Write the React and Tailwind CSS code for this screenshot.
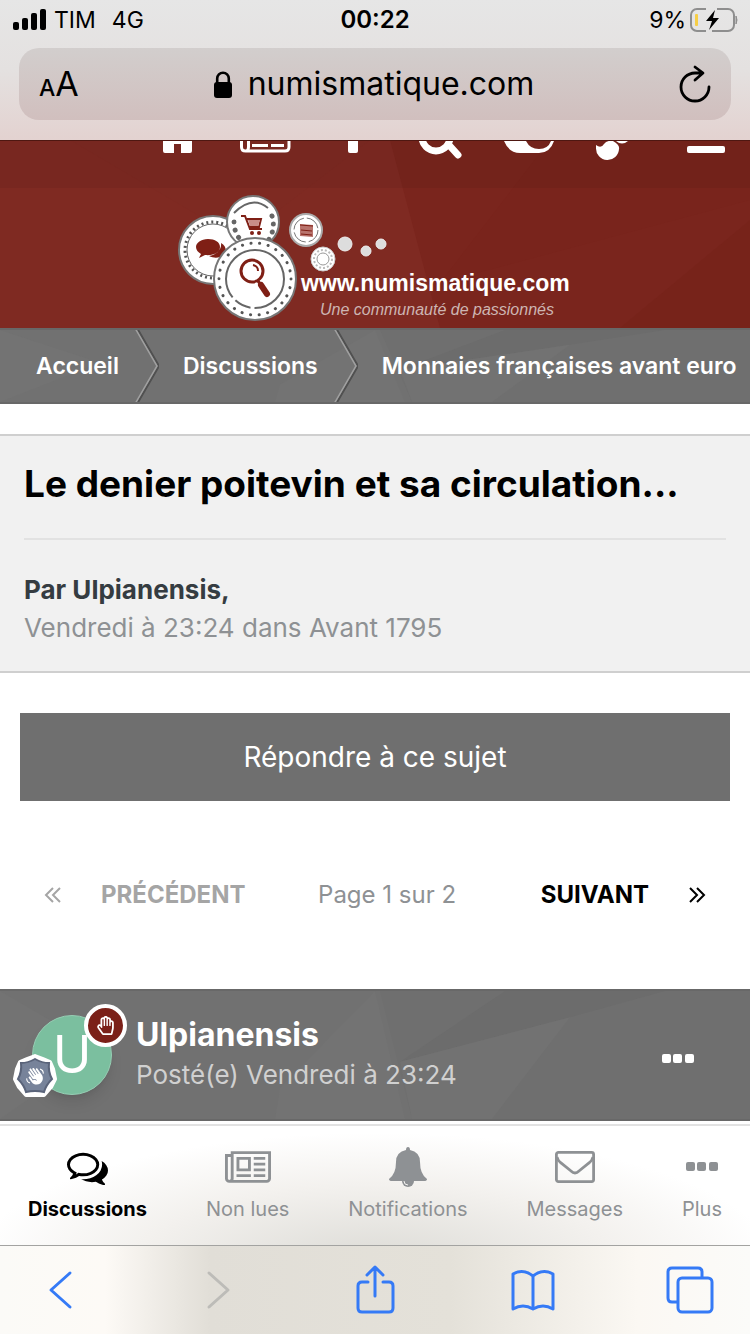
import { FaRegHandPaper } from "react-icons/fa";
import { MdWavingHand } from "react-icons/md";

function StatusBar() {
  return (
    <div className="grid grid-cols-3 items-center h-10 px-3">
      <div className="flex items-center text-[23px]">
        <svg width="34" height="22" viewBox="0 0 34 22" className="mr-2">
          <rect x="1" y="13" width="6" height="8" rx="2" />
          <rect x="10" y="9" width="6" height="12" rx="2" />
          <rect x="19" y="4" width="6" height="17" rx="2" />
          <rect x="28" y="0" width="6" height="21" rx="2" />
        </svg>
        <span className="mr-4">TIM</span>
        <span>4G</span>
      </div>
      <div className="text-center text-[24px] font-semibold">00:22</div>
      <div className="flex items-center justify-end gap-1 text-[23px]">
        <span>9%</span>
        <svg width="48" height="24" viewBox="0 0 48 24" fill="none">
          <path
            d="M16 1H7a6 6 0 0 0-6 6v10a6 6 0 0 0 6 6h9M27 1h11a6 6 0 0 1 6 6v10a6 6 0 0 1-6 6H22"
            stroke="#8e8e8e"
            strokeWidth="2"
          />
          <path d="M46 8q2 4 0 8z" fill="#8e8e8e" stroke="#8e8e8e" />
          <rect x="5" y="6" width="3" height="12" rx="1" fill="#f7ce46" />
          <path d="M25 2L16 13h6l-3 9 10-12h-6z" fill="#000" />
        </svg>
      </div>
    </div>
  );
}

function AddressBar() {
  return (
    <div className="flex items-center justify-between mx-[19px] mt-2 h-[72px] px-5 rounded-[20px] bg-gradient-to-b from-[#d2cecd] to-[#d1bfbe]">
      <button aria-label="Format de texte" className="w-[30px] text-left whitespace-nowrap leading-none">
        <span className="text-[23px] font-medium">A</span>
        <span className="text-[34px]">A</span>
      </button>
      <a href="#" className="flex items-center gap-4 text-[32px]">
        <svg width="18" height="27" viewBox="0 0 18 27">
          <rect x="0" y="11" width="18" height="16" rx="3" />
          <path d="M3.200 12V7.500a5.800 5.800 0 0 1 11.600 0V12" fill="none" stroke="#000" strokeWidth="2.600" />
        </svg>
        numismatique.com
      </a>
      <button aria-label="Recharger">
        <svg width="32" height="38" viewBox="0 0 32 38" fill="none" stroke="#000" strokeWidth="2.800" strokeLinecap="round" strokeLinejoin="round">
          <path d="M30 22a14 14 0 1 1-14-14h7M16 2l8 6-8 7" />
        </svg>
      </button>
    </div>
  );
}

function RedFacets() {
  return (
    <svg className="absolute inset-0 w-full h-full" viewBox="0 0 750 188" preserveAspectRatio="none" aria-hidden="true">
      <path d="M390 0L440 188H750V0z" fill="#7a251d" />
      <path d="M550 0L440 143L750 60V0z" fill="#79241c" />
      <path d="M70 0L240 100L370 0z" fill="#7e2a22" />
      <path d="M750 80L620 188H750z" fill="#77231a" />
    </svg>
  );
}

function GreyFacets() {
  return (
    <svg className="absolute inset-0 w-full h-full" viewBox="0 0 750 132" preserveAspectRatio="none" aria-hidden="true">
      <path d="M380 0L412 132H750V0z" fill="#6f6f6f" />
      <path d="M505 0L400 73L570 27L665 0z" fill="#6c6c6c" />
      <path d="M400 73L570 27L492 132H412z" fill="#727272" />
      <path d="M0 0L100 60L0 132z" fill="#737373" />
      <path d="M375 0L280 100L275 132H405z" fill="#737373" />
    </svg>
  );
}

const navIcons = [
  { label: "Accueil", art: <path d="M29 0H58V10q0 2-2 2H47V3H40V12H31q-2 0-2-2z" /> },
  {
    label: "Actualités",
    art: (
      <>
        <path d="M19.500 0V6q0 4 4 4H63q4 0 4-4V0M26.500 0V6q0 3-2 4" fill="none" stroke="#fff" strokeWidth="3" />
        <path d="M30 3h16v3H30zM49 3h13v3H49z" />
      </>
    ),
  },
  { label: "Facebook", art: <path d="M38 0H48V10q0 2-2 2H40q-2 0-2-2z" /> },
  {
    label: "Rechercher",
    art: (
      <>
        <path d="M24 -4a14 14 0 0 0 28 0" fill="none" stroke="#fff" strokeWidth="7" />
        <path d="M51 4L60 14" stroke="#fff" strokeWidth="7" strokeLinecap="round" />
      </>
    ),
  },
  {
    label: "Mode sombre",
    art: (
      <>
        <path d="M18 0Q23 12 34 12H53Q64 12 68 0z" />
        <path d="M40 0Q44 8 53 8Q62 8 65 0z" fill="#73231b" />
      </>
    ),
  },
  {
    label: "Thème",
    art: (
      <>
        <path d="M22 4q5 4 8-1q3-4 9-3q7 4 6 8a11 11 0 0 1-23-1z" />
        <path d="M42 0h12q-6 5-12 0z" />
      </>
    ),
  },
  { label: "Menu", art: <rect x="25" y="5" width="38" height="7" rx="2" /> },
];

function SiteHeader() {
  return (
    <header className="relative bg-[#7f2a22]">
      <RedFacets />
      <nav className="relative grid grid-cols-7 pl-[134px] border-t border-[#4e1711] bg-black/5">
        {navIcons.map((icon) => (
          <a key={icon.label} href="#" aria-label={icon.label} className="overflow-hidden">
            <svg viewBox="0 0 88 47" className="w-full h-[47px]" fill="#fff">
              {icon.art}
            </svg>
          </a>
        ))}
      </nav>
      <a href="#" className="relative flex justify-center">
        <Logo />
      </a>
    </header>
  );
}

function Logo() {
  return (
    <svg width="410" height="140" viewBox="0 0 410 140" fill="none">
      {/* chat coin */}
      <circle cx="43" cy="62" r="34" fill="#fff" stroke="#777" strokeWidth="2" />
      <circle cx="43" cy="62" r="26" stroke="#666" strokeWidth="1" />
      <circle cx="43" cy="62" r="28" stroke="#555" strokeWidth="3" strokeDasharray="2 3" />
      <path d="M38 51c-7 0-12 4-12 8 0 3 2 5 5 7l-2 4 6-3c9 1 15-3 15-8s-5-8-12-8zM51 55c1 7-5 12-12 13 4 2 8 2 11 1l5 3-2-4c4-3 4-10-2-13z" fill="#7f1f15" />
      {/* cart coin */}
      <circle cx="83" cy="34" r="26" fill="#fff" stroke="#777" strokeWidth="2" />
      <path d="M64 25Q82 7 98 20" stroke="#666" strokeWidth="2" />
      <path d="M64 34q0 9 5 16M102 28q4 13-4 25" stroke="#666" strokeWidth="5" strokeLinecap="round" strokeDasharray="0.100 8" />
      <path d="M71 28h4l5 13h12M77 31h14l-2 8H79" stroke="#7f1f15" strokeWidth="2" />
      <path d="M78 32h12l-2 6H80z" fill="#c78d88" />
      <circle cx="82" cy="45" r="2" fill="#7f1f15" />
      <circle cx="89" cy="45" r="2" fill="#7f1f15" />
      {/* search coin */}
      <circle cx="85" cy="91" r="41" fill="#fff" stroke="#777" strokeWidth="2" />
      <circle cx="85" cy="91" r="36" stroke="#555" strokeWidth="3" strokeLinecap="round" strokeDasharray="0.100 8.600" />
      <circle cx="85" cy="91" r="29" stroke="#666" strokeWidth="2" strokeDasharray="46 4 17 4 200" />
      <circle cx="82" cy="83" r="11" stroke="#7f1f15" strokeWidth="3" />
      <path d="M83 77q5 1 5 6" stroke="#7f1f15" strokeWidth="2" />
      <path d="M88 93l3 4" stroke="#7f1f15" strokeWidth="3" />
      <path d="M91 97l6 9" stroke="#7f1f15" strokeWidth="6" strokeLinecap="round" />
      {/* small coins */}
      <circle cx="136" cy="42" r="16" fill="#fff" stroke="#aaa" strokeWidth="2" />
      <circle cx="136" cy="42" r="12" stroke="#777" strokeWidth="1" strokeDasharray="16 3" />
      <path d="M130 36l13 1v12l-13-1z" fill="#b8736c" />
      <path d="M130 37l13 1M131 42l11 1M131 46l11 1" stroke="#7f1f15" />
      <circle cx="153" cy="71" r="12" fill="#fff" stroke="#ccc" />
      <circle cx="153" cy="71" r="9" stroke="#bbb" strokeWidth="2" strokeDasharray="2 2" />
      <circle cx="153" cy="71" r="6" stroke="#999" />
      <circle cx="175" cy="56" r="7" fill="#ddd" stroke="#eee" />
      <circle cx="196" cy="63" r="5" fill="#ddd" stroke="#eee" />
      <circle cx="211" cy="56" r="5" fill="#ddd" stroke="#eee" />
      <text x="131" y="103" fill="#fff" className="font-['Liberation_Sans'] font-bold text-[23px]">
        www.numismatique.com
      </text>
      <text x="150" y="127" fill="#cdb5b2" className="font-['Liberation_Sans'] italic text-[16px]">
        Une communauté de passionnés
      </text>
    </svg>
  );
}

function Chevron() {
  return (
    <svg width="24" height="76" viewBox="0 0 24 76" fill="none" className="shrink-0">
      <path d="M2 0L24 38L2 76" stroke="#505050" strokeWidth="2" />
      <path d="M0 0L22 38L0 76" stroke="#a0a0a0" strokeWidth="1.500" />
    </svg>
  );
}

function Breadcrumb() {
  return (
    <nav className="relative h-[76px] overflow-hidden bg-[#717171] border-y-2 border-[#686868]">
      <GreyFacets />
      <div className="relative flex items-center h-full pl-9 text-[23px] font-semibold text-white whitespace-nowrap">
        <a href="#" className="mr-4">Accueil</a>
        <Chevron />
        <a href="#" className="ml-6 mr-4">Discussions</a>
        <Chevron />
        <a href="#" className="ml-6">Monnaies françaises avant euro</a>
      </div>
    </nav>
  );
}

function TopicHeader() {
  return (
    <section className="mt-[30px] px-6 pt-5 pb-6 bg-[#f1f1f1] border-y-2 border-[#cfcfcf]">
      <h1 className="pb-[26px] border-b-2 border-[#e2e2e2] text-[37px] leading-[56px] font-bold whitespace-nowrap">
        Le denier poitevin et sa circulation...
      </h1>
      <div className="pt-[31px] text-[26px] leading-[38px]">
        <p className="font-bold text-[#353c41]">Par Ulpianensis,</p>
        <p className="text-[#8e9194]">Vendredi à 23:24 dans Avant 1795</p>
      </div>
    </section>
  );
}

function Pager() {
  return (
    <div className="flex items-center justify-between mt-[64px] px-11 h-[60px] text-[24px]">
      <button className="flex items-center gap-10 font-bold text-[#a5a5a5]">
        <DoubleAngle className="rotate-180" />
        PRÉCÉDENT
      </button>
      <span className="mr-3 text-[#8e9194]">Page 1 sur 2</span>
      <button className="flex items-center gap-10 font-bold">
        SUIVANT
        <DoubleAngle />
      </button>
    </div>
  );
}

function DoubleAngle({ className }) {
  return (
    <svg width="17" height="16" viewBox="0 0 17 16" fill="none" stroke="currentColor" strokeWidth="2" className={className}>
      <path d="M1 1l7 7-7 7M8 1l7 7-7 7" />
    </svg>
  );
}

function Avatar() {
  return (
    <div className="relative w-20 h-20 rounded-full bg-[#7bbf9f] border border-[#96ceb4] shadow-lg flex items-center justify-center text-white text-[52px] leading-none">
      U
      <span className="absolute -top-3 -right-4 flex items-center justify-center w-[43px] h-[43px] rounded-full bg-[#7b2018] border-4 border-white text-[19px]">
        <FaRegHandPaper />
      </span>
      <span className="absolute -bottom-1 -left-5 w-11 h-11 flex items-center justify-center">
        <svg width="44" height="44" viewBox="0 0 44 44" className="absolute inset-0">
          <path d="M22 2L30 5L37 8L40 15L42 25L38 33L31 41L22 41L13 41L6 33L2 25L4 15L7 8L14 5z" fill="#fff" stroke="#fff" strokeWidth="4" strokeLinejoin="round" />
          <path d="M22 5Q29 9 36 9Q35 18 39 25Q33 31 31 38Q22 36 13 38Q11 31 5 25Q9 18 8 9Q15 9 22 5z" fill="#77839a" stroke="#5a647a" strokeWidth="2" />
        </svg>
        <MdWavingHand className="relative text-[18px] -rotate-80" />
      </span>
    </div>
  );
}

function PostHeader() {
  return (
    <article className="relative mt-[64px] h-[132px] bg-[#717171] border-y-2 border-[#686868]">
      <GreyFacets />
      <div className="relative flex items-center h-full pl-8 pr-14">
        <Avatar />
        <div className="ml-6 flex-1">
          <h2 className="text-[32px] leading-[40px] font-bold text-white">Ulpianensis</h2>
          <p className="text-[26px] leading-[40px] text-[#d0d0d0]">Posté(e) Vendredi à 23:24</p>
        </div>
        <button aria-label="Options" className="mt-2 text-white">
          <Dots />
        </button>
      </div>
    </article>
  );
}

function Dots() {
  return (
    <svg width="32" height="10" viewBox="0 0 32 10" fill="currentColor">
      <rect width="9" height="9" rx="2" />
      <rect x="11" width="9" height="9" rx="2" />
      <rect x="23" width="9" height="9" rx="2" />
    </svg>
  );
}

const tabs = [
  {
    label: "Discussions",
    active: true,
    icon: (
      <svg width="41" height="41" viewBox="0 0 1792 1792" fill="currentColor">
        <path d="M704 384q-153 0-286 52t-211.500 141-78.500 191q0 82 53 158t149 132l97 56-35 84q34-20 62-39l44-31 53 10q78 14 153 14 153 0 286-52t211.500-141 78.500-191-78.500-191-211.500-141-286-52zm0-128q191 0 353.500 68.500t256.500 186.500 94 257-94 257-256.500 186.500-353.500 68.500q-86 0-176-16-124 88-278 128-36 9-86 16h-3q-11 0-20.500-8t-11.500-21q-1-3-1-6.500t.5-6.500 2-6l2.500-5 3.500-5.500 4-5 4.500-5 4-4.500q5-6 23-25t26-29.500 22.500-29 25-38.500 20.500-44q-124-72-195-177t-71-224q0-139 94-257t256.500-186.500 353.500-68.500zm822 1169q10 24 20.500 44t25 38.500 22.500 29 26 29.500 23 25q1 1 4 4.500t4.500 5 4 5 3.500 5.500l2.500 5 2 6 .5 6.500-1 6.500q-3 14-13 22t-22 7q-50-7-86-16-154-40-278-128-90 16-176 16-271 0-472-132 58 4 88 4 161 0 309-45t264-129q125-92 192-212t67-254q0-77-23-152 129 71 204 178t75 230q0 120-71 224.500t-195 176.500z" />
      </svg>
    ),
  },
  {
    label: "Non lues",
    icon: (
      <svg width="46" height="32" viewBox="0 128 2048 1408" fill="currentColor">
        <path d="M1024 512h-384v384h384v-384zm128 640v128h-640v-128h640zm0-768v640h-640v-640h640zm640 768v128h-512v-128h512zm0-256v128h-512v-128h512zm0-256v128h-512v-128h512zm0-256v128h-512v-128h512zm-1536 960v-960h-128v960q0 26 19 45t45 19 45-19 19-45zm1664 0v-1088h-1536v1088q0 33-11 64h1483q26 0 45-19t19-45zm128-1216v1216q0 80-56 136t-136 56h-1664q-80 0-136-56t-56-136v-1088h256v-128h1792z" />
      </svg>
    ),
  },
  {
    label: "Notifications",
    icon: (
      <svg width="38" height="40" viewBox="0 0 38 40" fill="currentColor">
        <path d="M19 0q2 0 2 3 10 2 10 12 0 12 7 17 0 2-3 2H3q-3 0-3-2 7-5 7-17Q7 5 17 3q0-3 2-3z" />
        <path d="M13 34h12a6 6 0 0 1-12 0z" />
        <path d="M15 34q0 4 4 4" fill="none" stroke="#f3f2f0" />
      </svg>
    ),
  },
  {
    label: "Messages",
    icon: (
      <svg width="40" height="32" viewBox="0 0 40 32" fill="none" stroke="currentColor" strokeWidth="2.800">
        <rect x="1.400" y="1.400" width="37.200" height="29.200" rx="2" />
        <path d="M2 6q1 4 4 6l10 8q4 4 8 0l10-8q3-2 4-6" />
      </svg>
    ),
  },
  { label: "Plus", icon: <Dots /> },
];

function TabBar() {
  return (
    <nav className="flex justify-between mt-[3px] px-7 h-[121px] border-t-2 border-[#e2e2e2] bg-[radial-gradient(ellipse_400px_130px_at_50%_115%,#dcdbd6,#f3f1ee_60%,#ffffff_100%)]">
      {tabs.map((tab) => (
        <a
          key={tab.label}
          href="#"
          className={`flex flex-col items-center pt-5 ${
            tab.active ? "font-bold text-black" : "text-[#8e9194]"
          }`}
        >
          <span className="flex items-center h-[42px]">{tab.icon}</span>
          <span className="mt-2 text-[20px] leading-[26px]">{tab.label}</span>
        </a>
      ))}
    </nav>
  );
}

function BrowserToolbar() {
  return (
    <div className="flex items-center justify-between px-9 h-[89px] border-t border-[#a3a3a1] bg-[linear-gradient(90deg,#fbfaf7,#fdfaf6_14%,#e1ded7_28%,#e4e1d9_60%,#fbf8f3_85%,#fbfbf9)] text-[#357af6]">
      <ToolButton label="Précédent">
        <path d="M34 8L15 25L34 42" />
      </ToolButton>
      <ToolButton label="Suivant" disabled>
        <path d="M15 8L34 25L15 42" />
      </ToolButton>
      <ToolButton label="Partager">
        <path d="M17 17h-6q-4 0-4 4v22q0 4 4 4h27q4 0 4-4V21q0-4-4-4h-6M24 31V2M16 10l8-8 8 8" />
      </ToolButton>
      <ToolButton label="Signets">
        <path d="M24 11Q14 3 4 9V44Q14 38 24 44Q34 38 44 44V9Q34 3 24 11zM24 11V44" />
      </ToolButton>
      <ToolButton label="Onglets">
        <rect x="12" y="13" width="34" height="34" rx="4" />
        <path d="M36 12V7q0-4-4-4H6Q2 3 2 7v26q0 4 4 4h5" />
      </ToolButton>
    </div>
  );
}

function ToolButton({ label, disabled, children }) {
  return (
    <button aria-label={label} disabled={disabled} className={disabled ? "text-[#bdbcb8]" : ""}>
      <svg width="48" height="50" viewBox="0 0 48 50" fill="none" stroke="currentColor" strokeWidth="3" strokeLinecap="round" strokeLinejoin="round">
        {children}
      </svg>
    </button>
  );
}

export default function App() {
  return (
    <div className="min-h-screen overflow-hidden bg-white text-black font-['Inter','Liberation_Sans',sans-serif]">
      <div className="pb-5 bg-gradient-to-b from-[#e6e6e6] via-[#e4e1e0] to-[#e3d2d0]">
        <StatusBar />
        <AddressBar />
      </div>
      <SiteHeader />
      <Breadcrumb />
      <main>
        <TopicHeader />
        <div className="px-5 mt-10">
          <button className="w-full h-[88px] bg-[#6f6f6f] text-white text-[28px]">Répondre à ce sujet</button>
        </div>
        <Pager />
        <PostHeader />
      </main>
      <TabBar />
      <BrowserToolbar />
    </div>
  );
}
